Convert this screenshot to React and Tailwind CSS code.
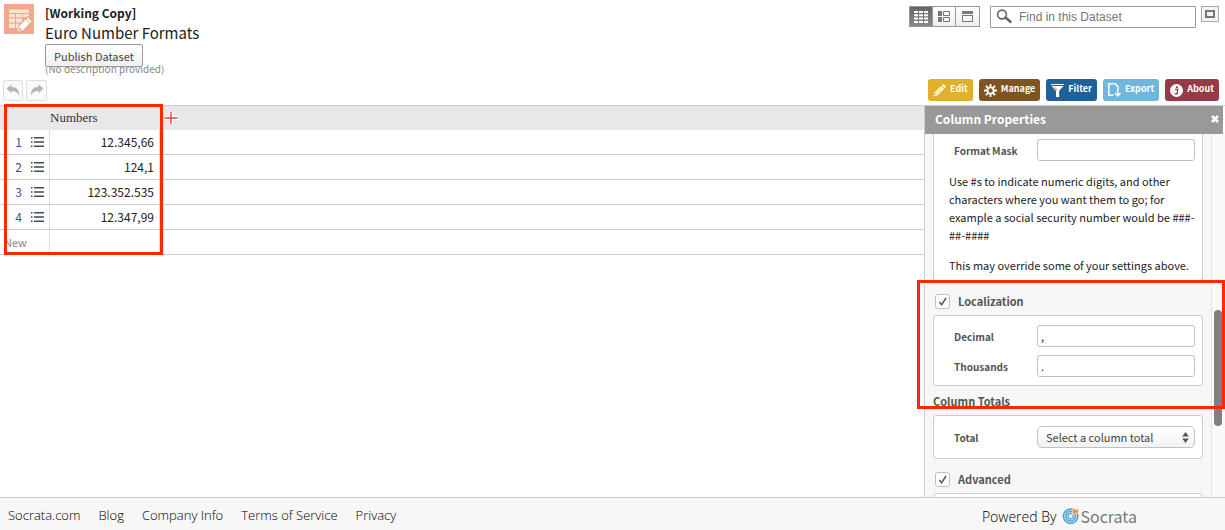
import React from 'react';

const rows = ['12.345,66', '124,1', '123.352.535', '12.347,99'];

const footerLinks = ['Socrata.com', 'Blog', 'Company Info', 'Terms of Service', 'Privacy'];

const PencilIcon = () => (
    <svg width="13" height="13" viewBox="0 0 13 13" aria-hidden="true">
        <path d="M0.5 12.5 L1.8 8.2 L8 2 L11 5 L4.8 11.2 Z" fill="#fff" />
        <path d="M8.8 1.3 L9.8 0.4 Q10.4 0 11 0.5 L12.5 2 Q13 2.6 12.5 3.2 L11.7 4.2 Z" fill="#fff" />
        <path d="M3.2 8.7 L8.3 3.7 M4.5 9.8 L9.5 4.8" stroke="#e1b12d" strokeWidth="0.6" />
        <path d="M1.4 11.6 L2.3 9.1 L3.9 10.7 Z" fill="#e1b12d" />
    </svg>
);

const GearIcon = () => (
    <svg width="13" height="13" viewBox="0 0 13 13" aria-hidden="true">
        <circle cx="6.5" cy="6.5" r="3.1" fill="none" stroke="#fff" strokeWidth="1.8" />
        <path
            d="M6.5 0 V3 M6.5 10 V13 M0 6.5 H3 M10 6.5 H13 M1.9 1.9 L4 4 M9 9 L11.1 11.1 M11.1 1.9 L9 4 M4 9 L1.9 11.1"
            stroke="#fff"
            strokeWidth="1.8"
        />
    </svg>
);

const FunnelIcon = () => (
    <svg width="13" height="13" viewBox="0 0 13 13" aria-hidden="true">
        <path d="M0 0.5 H13" stroke="#fff" strokeWidth="1" />
        <path d="M0.5 2 H12.5 L8.2 6.8 V13 H5 V6.8 Z" fill="#fff" />
        <path d="M3.4 3.2 L6 6.2" stroke="#21619a" strokeWidth="0.7" />
    </svg>
);

const ExportIcon = () => (
    <svg width="13" height="14" viewBox="0 0 13 14" aria-hidden="true">
        <path d="M5.5 12.3 H0.8 V0.8 H7 L10.2 4 V6" fill="none" stroke="#fff" strokeWidth="1.5" />
        <path d="M9.8 6 V12.5 M7 9.9 L9.8 12.8 L12.6 9.9" fill="none" stroke="#fff" strokeWidth="1.5" />
    </svg>
);

const InfoIcon = () => (
    <svg width="13" height="13" viewBox="0 0 13 13" aria-hidden="true">
        <circle cx="6.5" cy="6.5" r="6.5" fill="#fff" />
        <circle cx="7" cy="3.3" r="1.1" fill="#943c45" />
        <path d="M5 5.4 H7.8 L6.9 9.6 H8 M4.8 9.9 H7.6" fill="none" stroke="#943c45" strokeWidth="1.2" />
    </svg>
);

const tabs = [
    { label: 'Edit', icon: PencilIcon, color: 'bg-[#e1b12d]' },
    { label: 'Manage', icon: GearIcon, color: 'bg-[#7e5522]' },
    { label: 'Filter', icon: FunnelIcon, color: 'bg-[#21619a]' },
    { label: 'Export', icon: ExportIcon, color: 'bg-[#6fb7dc]' },
    { label: 'About', icon: InfoIcon, color: 'bg-[#943c45]' },
];

const DatasetIcon = () => (
    <svg className="shrink-0" width="30" height="30" viewBox="0 0 30 30" aria-hidden="true">
        <rect width="30" height="30" fill="#efa88d" />
        <rect x="5" y="5.5" width="20" height="3.6" rx="1" fill="#fbe3da" />
        <g fill="#fbe3da">
            <rect x="5" y="10" width="6" height="3.2" />
            <rect x="12" y="10" width="6" height="3.2" />
            <rect x="19" y="10" width="6" height="3.2" />
            <rect x="5" y="14.4" width="6" height="4" />
            <rect x="12" y="14.4" width="6" height="4" />
            <rect x="5" y="19.6" width="6" height="4.6" />
            <rect x="12" y="19.6" width="3" height="4.6" />
        </g>
        <path d="M13 28 L14.6 22 L23.6 12.8 L28.4 17.4 L19.2 26.6 Z" fill="#fff" stroke="#efa88d" strokeWidth="1.2" />
        <path d="M21.6 14.6 L26.4 19.2" stroke="#efa88d" strokeWidth="1" />
        <path d="M14.6 26.6 L15.5 23.4 L18 25.8 Z" fill="#efa88d" />
    </svg>
);

const UndoArrow = ({ flipped }) => (
    <svg className={flipped ? '-scale-x-100' : ''} width="14" height="13" viewBox="0 0 14 13" aria-hidden="true">
        <path d="M0.5 4.5 L5.5 0.5 V3 Q13.5 2.8 13.2 12 Q11.5 7 5.5 7 V9.2 Z" fill="#b5b5b5" />
    </svg>
);

const ListIcon = () => (
    <svg width="13" height="10" viewBox="0 0 13 10" aria-hidden="true">
        <path d="M0 0.8 H1.5 M0 5 H1.5 M0 9.2 H1.5 M3 0.8 H13 M3 5 H13 M3 9.2 H13" stroke="#3d4d57" strokeWidth="1.4" />
    </svg>
);

const SocrataMark = () => (
    <svg width="18" height="18" viewBox="0 0 18 18" aria-hidden="true">
        <circle cx="8.6" cy="9.2" r="8" fill="#4ba5d0" />
        <g fill="none" stroke="#d5ebf5" strokeWidth="0.9">
            <circle cx="8.6" cy="9.2" r="6" />
            <circle cx="8.6" cy="9.2" r="3.8" />
        </g>
        <circle cx="8.6" cy="9.2" r="2" fill="#f7f7f7" />
        <path d="M10.2 7.6 L11.4 1 L14 2.8 L16.6 1.4 L16 5.8 Z" fill="#f08a2c" stroke="#f7f7f7" strokeWidth="0.7" />
    </svg>
);

const ViewIcon = ({ kind }) => {
    if (kind === 'Table') {
        return (
            <svg width="14" height="12" viewBox="0 0 14 12" aria-hidden="true">
                <path
                    d="M0 1 H4 M5 1 H9 M10 1 H14 M0 4.3 H4 M5 4.3 H9 M10 4.3 H14 M0 7.6 H4 M5 7.6 H9 M10 7.6 H14 M0 11 H4 M5 11 H9 M10 11 H14"
                    stroke="#fff"
                    strokeWidth="2"
                />
            </svg>
        );
    }
    if (kind === 'List') {
        return (
            <svg width="12" height="11" viewBox="0 0 12 11" aria-hidden="true">
                <path d="M0 0 H4 V5 H0 Z M0 6 H4 V11 H0 Z" fill="#777" />
                <path d="M5.5 0.5 H11.5 V4.5 H5.5 Z M5.5 6.5 H11.5 V10.5 H5.5 Z" fill="none" stroke="#777" />
            </svg>
        );
    }
    return (
        <svg width="11" height="11" viewBox="0 0 11 11" aria-hidden="true">
            <rect width="11" height="3" fill="#777" />
            <rect x="0.5" y="4.5" width="10" height="6" fill="none" stroke="#777" />
        </svg>
    );
};

const TextField = ({ id, label, value }) => (
    <div className="flex items-center pl-5 pr-[7px]">
        <label htmlFor={id} className="w-[83px] text-[10px] font-bold text-[#555]">{label}</label>
        <input
            id={id}
            type="text"
            defaultValue={value}
            className="h-[22px] min-w-0 flex-1 rounded-[3px] border border-[#c0c0c0] bg-white px-[3px] text-[11px] text-[#222]"
        />
    </div>
);

const CheckHeading = ({ id, label }) => (
    <div className="flex h-[34px] items-center gap-2 px-[2px] pt-[7px]">
        <span className="relative flex size-[15px]">
            <input id={id} type="checkbox" defaultChecked className="peer size-[15px] appearance-none rounded-[3px] border border-[#c0c0c0] bg-white" />
            <svg className="pointer-events-none absolute inset-0 hidden peer-checked:block" width="15" height="15" viewBox="0 0 15 15" aria-hidden="true">
                <path d="M4.3 8 L6.6 10.8 L11 4" fill="none" stroke="#555" strokeWidth="1.5" />
            </svg>
        </span>
        <label htmlFor={id} className="font-bold text-[#555]">{label}</label>
    </div>
);

const Header = () => (
    <header className="flex h-[79px] items-start justify-between pl-1 pr-[6px]">
        <div className="flex gap-[11px] pt-1">
            <DatasetIcon />
            <div className="flex flex-col items-start text-[#222]">
                <h1 className="text-[12px] leading-[18px]">
                    <span className="block font-bold">[Working Copy]</span>
                    <span className="block text-[15px] leading-[22px]">Euro Number Formats</span>
                </h1>
                <button
                    type="button"
                    className="relative z-10 h-[23px] rounded-[2px] border border-[#999] bg-gradient-to-b from-white to-[#f0f0f0] px-2 text-[11px] leading-[20px] text-[#444]"
                >
                    Publish Dataset
                </button>
                <p className="-mt-1 text-[10px] leading-3 text-[#888]">(No description provided)</p>
            </div>
        </div>
        <div className="flex items-start pt-[6px]">
            <div className="mr-[10px] flex h-[21px] divide-x divide-[#999] border border-[#999]">
                {['Table', 'List', 'Page'].map((kind) => (
                    <button
                        key={kind}
                        type="button"
                        aria-label={`${kind} view`}
                        className={
                            kind === 'Table'
                                ? 'flex w-[23px] items-center justify-center bg-gradient-to-b from-[#666] to-[#888]'
                                : 'flex w-[23px] items-center justify-center bg-gradient-to-b from-white to-[#eee]'
                        }
                    >
                        <ViewIcon kind={kind} />
                    </button>
                ))}
            </div>
            <div className="relative mr-[5px]">
                <svg className="absolute left-[6px] top-[3px]" width="17" height="15" viewBox="0 0 17 15" aria-hidden="true">
                    <circle cx="6" cy="5.5" r="4.4" fill="none" stroke="#666" strokeWidth="1.6" />
                    <path d="M9.4 8.6 L14.4 12.8" stroke="#666" strokeWidth="2.6" strokeLinecap="round" />
                </svg>
                <input
                    type="search"
                    aria-label="Find in this Dataset"
                    placeholder="Find in this Dataset"
                    className="block h-[22px] w-[206px] rounded-[1px] border border-[#999] pl-7 font-['Liberation_Sans',sans-serif] text-[12px] placeholder:text-[#777]"
                />
            </div>
            <button type="button" aria-label="Full screen" className="flex h-4 w-[18px] items-center justify-center border border-[#aaa] bg-[#f4f4f4]">
                <span className="h-2 w-[10px] border-2 border-[#777]" />
            </button>
        </div>
    </header>
);

const Toolbar = () => (
    <div className="flex h-[26px] items-start justify-between pl-[3px] pr-[6px]">
        <div className="flex gap-[3px] pt-px">
            <button type="button" aria-label="Undo" className="flex h-[21px] w-5 items-center justify-center rounded-[2px] border border-[#ddd] bg-[#fafafa]">
                <UndoArrow />
            </button>
            <button type="button" aria-label="Redo" className="flex h-[21px] w-[21px] items-center justify-center rounded-[2px] border border-[#ddd] bg-[#fafafa]">
                <UndoArrow flipped />
            </button>
        </div>
        <nav className="flex gap-[6px]">
            {tabs.map(({ label, icon: Icon, color }) => (
                <button
                    key={label}
                    type="button"
                    className={`flex h-[22px] items-center gap-1 rounded-[3px] px-[5px] text-[9px] font-bold text-white ${color}`}
                >
                    <Icon />
                    <span className="pb-[2px]">{label}</span>
                </button>
            ))}
        </nav>
    </div>
);

const Grid = () => (
    <div className="relative min-w-0 flex-1">
        <table className="w-full table-fixed border-separate border-spacing-0 text-[12px] leading-[18px] text-[#222]">
            <colgroup>
                <col className="w-[50px]" />
                <col className="w-[110px]" />
                <col />
            </colgroup>
            <thead>
                <tr className="h-6 bg-[#e8e8e8]">
                    <th aria-label="Row" className="p-0" />
                    <th className="p-0 text-left font-['Liberation_Serif',serif] text-[13px] font-normal text-[#333]">Numbers</th>
                    <th className="p-0 text-left">
                        <button type="button" aria-label="Add column" className="ml-1 block">
                            <svg width="14" height="14" viewBox="0 0 14 14" aria-hidden="true">
                                <path d="M7 0 V14 M0 7 H14" stroke="#fff" strokeWidth="4" />
                                <path d="M7 0.5 V13.5 M0.5 7 H13.5" stroke="#e8403a" strokeWidth="1.4" />
                            </svg>
                        </button>
                    </th>
                </tr>
            </thead>
            <tbody>
                {rows.map((value, index) => (
                    <tr key={value} className="h-[25px]">
                        <td className="border-b border-r border-b-[#ccc] border-r-[#ddd] p-0">
                            <span className="flex items-center justify-end gap-[9px] pr-[5px] text-[#3a549a]">
                                {index + 1}
                                <ListIcon />
                            </span>
                        </td>
                        <td className="border-b border-r border-b-[#ccc] border-r-[#ddd] p-0 pr-[5px] text-right">{value}</td>
                        <td className="border-b border-b-[#ccc] p-0" />
                    </tr>
                ))}
                <tr className="h-[25px]">
                    <td className="border-b border-r border-b-[#ccc] border-r-[#ddd] p-0 pl-1 text-[11px] text-[#888]">New</td>
                    <td className="border-b border-r border-b-[#ccc] border-r-[#ddd] p-0" />
                    <td className="border-b border-b-[#ccc] p-0" />
                </tr>
            </tbody>
        </table>
        <div className="pointer-events-none absolute -top-[2px] left-1 h-[151px] w-[159px] border-3 border-[#ff2600]" />
    </div>
);

const ColumnProperties = () => (
    <aside className="relative flex w-[301px] shrink-0 flex-col border-l border-[#ccc] text-[11px]">
        <div className="mr-[2px] flex h-7 shrink-0 items-center justify-between bg-[#999] pb-[2px] pl-[10px] pr-1 text-white">
            <h2 className="text-[12px] font-bold">Column Properties</h2>
            <button type="button" aria-label="Close">
                <svg width="8" height="8" viewBox="0 0 8 8" aria-hidden="true">
                    <path d="M1 1 L7 7 M7 1 L1 7" stroke="#fff" strokeWidth="2.6" />
                </svg>
            </button>
        </div>
        <div className="flex min-h-0 flex-1 overflow-hidden bg-[#f7f7f7]">
            <div className="min-w-0 flex-1 border-r border-[#e4e4e4] pl-2 pr-2">
                <div className="rounded-b-[3px] border border-t-0 border-[#ccc] bg-white pb-[6px] pt-[5px]">
                    <TextField id="format-mask" label="Format Mask" value="" />
                    <div className="flex flex-col gap-3 pl-[15px] pr-1 pt-[11px] leading-[18px] text-[#222]">
                        <p>
                            Use #s to indicate numeric digits, and other characters where you want them to go; for
                            example a social security number would be ###-<wbr />##-####
                        </p>
                        <p>This may override some of your settings above.</p>
                    </div>
                </div>
                <CheckHeading id="localization" label="Localization" />
                <div className="flex flex-col gap-2 rounded-[3px] border border-[#ccc] bg-white pb-2 pt-[9px]">
                    <TextField id="decimal" label="Decimal" value="," />
                    <TextField id="thousands" label="Thousands" value="." />
                </div>
                <h3 className="flex h-[29px] items-center pt-[2px] font-bold text-[#555]">Column Totals</h3>
                <div className="rounded-[3px] border border-[#ccc] bg-white py-[10px]">
                    <div className="flex items-center pl-5 pr-[7px]">
                        <label htmlFor="total" className="w-[83px] text-[10px] font-bold text-[#555]">Total</label>
                        <div className="relative min-w-0 flex-1">
                            <select
                                id="total"
                                className="block h-[22px] w-full appearance-none rounded-[5px] border border-[#c0c0c0] bg-gradient-to-b from-white to-[#f2f2f2] pl-2 text-[11px] text-[#444]"
                            >
                                <option>Select a column total</option>
                            </select>
                            <svg className="pointer-events-none absolute right-[6px] top-[6px]" width="7" height="11" viewBox="0 0 7 11" aria-hidden="true">
                                <path d="M3.5 0 L6.8 4.5 H0.2 Z M3.5 11 L0.2 6.5 H6.8 Z" fill="#555" />
                            </svg>
                        </div>
                    </div>
                </div>
                <CheckHeading id="advanced" label="Advanced" />
                <div className="h-6 rounded-t-[3px] border border-[#ccc] bg-white" />
            </div>
            <div className="w-[13px] bg-[#fafafa] pl-[2px] pt-[176px]">
                <div className="h-[116px] w-2 rounded-full bg-[#808080]" />
            </div>
        </div>
        <div className="pointer-events-none absolute -left-2 right-0 top-[174px] h-[129px] border-3 border-[#ff2600]" />
    </aside>
);

const Footer = () => (
    <footer className="flex h-[33px] shrink-0 items-center justify-between border-t border-[#ccc] bg-[#f7f7f7] pl-2 pr-[88px] pt-1 font-['Open_Sans',sans-serif] text-[13px] font-light text-black">
        <nav className="flex gap-[18px]">
            {footerLinks.map((link) => (
                <a key={link} href="#">{link}</a>
            ))}
        </nav>
        <div className="flex items-center gap-[6px]">
            <span className="text-[14px]">Powered By</span>
            <a href="#" className="flex items-center font-['Noto_Sans_CJK_SC',sans-serif] text-[16px] leading-5 font-normal text-[#777]">
                <SocrataMark />
                Socrata
            </a>
        </div>
    </footer>
);

const App = () => (
    <div className="flex h-screen flex-col overflow-hidden bg-white font-['Noto_Sans_CJK_SC',sans-serif]">
        <Header />
        <Toolbar />
        <main className="flex min-h-0 flex-1 border-t border-[#ccc]">
            <Grid />
            <ColumnProperties />
        </main>
        <Footer />
    </div>
);

export default App;
